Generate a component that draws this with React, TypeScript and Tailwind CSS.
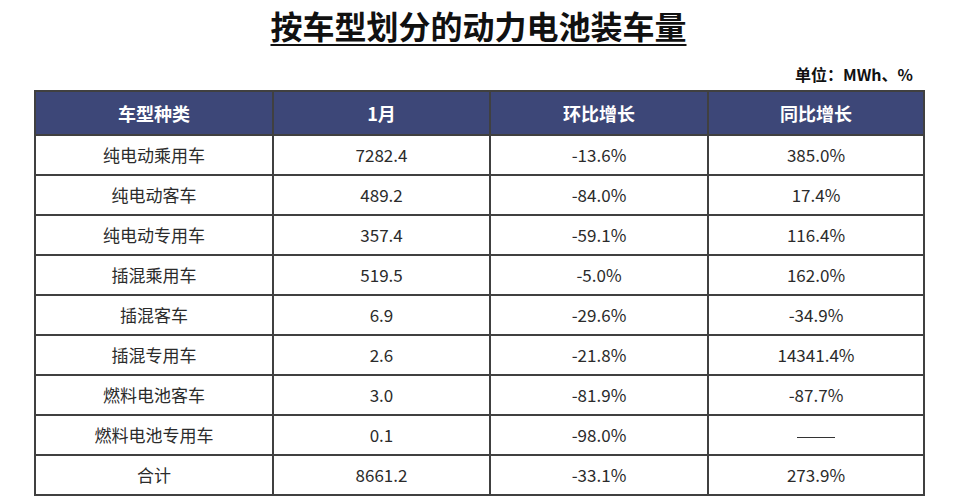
const rows: [string, string, string, string][] = [
  ['纯电动乘用车', '7282.4', '-13.6%', '385.0%'],
  ['纯电动客车', '489.2', '-84.0%', '17.4%'],
  ['纯电动专用车', '357.4', '-59.1%', '116.4%'],
  ['插混乘用车', '519.5', '-5.0%', '162.0%'],
  ['插混客车', '6.9', '-29.6%', '-34.9%'],
  ['插混专用车', '2.6', '-21.8%', '14341.4%'],
  ['燃料电池客车', '3.0', '-81.9%', '-87.7%'],
  ['燃料电池专用车', '0.1', '-98.0%', '——'],
  ['合计', '8661.2', '-33.1%', '273.9%'],
];

const cjk = { fontFamily: '"Noto Sans CJK SC", "Noto Sans", sans-serif' };

export default function App() {
  return (
    <div className="w-[967px] h-[501px] bg-white overflow-hidden" style={cjk}>
      <div className="w-[889px] ml-[34px] pt-[4px]">
        <h1 className="text-center text-[32px] leading-[43px] font-bold text-[#111] underline decoration-2 underline-offset-[5px]">
          按车型划分的动力电池装车量
        </h1>
        <div className="mt-[15px] h-[24px] leading-[24px] text-right pr-[10px] text-[16px] font-bold text-[#111]">
          单位：MWh、%
        </div>
        <table className="mt-[4px] w-full border-collapse table-fixed text-[17px] text-[#2b2b2b] tabular-nums">
          <colgroup>
            <col className="w-[238px]" />
            <col className="w-[217px]" />
            <col className="w-[218px]" />
            <col className="w-[216px]" />
          </colgroup>
          <thead>
            <tr className="bg-[#3d4778] text-white font-bold text-[18px]">
              {['车型种类', '1月', '环比增长', '同比增长'].map((h) => (
                <th key={h} className="h-[44px] border-2 border-[#404040] text-center font-bold">
                  {h}
                </th>
              ))}
            </tr>
          </thead>
          <tbody>
            {rows.map((r) => (
              <tr key={r[0]}>
                {r.map((c, i) => (
                  <td key={i} className="h-[40px] border-2 border-[#404040] text-center p-0">
                    {c === '——' ? <span className="inline-block w-[38px] h-[1px] bg-[#333] align-middle" /> : c}
                  </td>
                ))}
              </tr>
            ))}
          </tbody>
        </table>
      </div>
    </div>
  );
}
